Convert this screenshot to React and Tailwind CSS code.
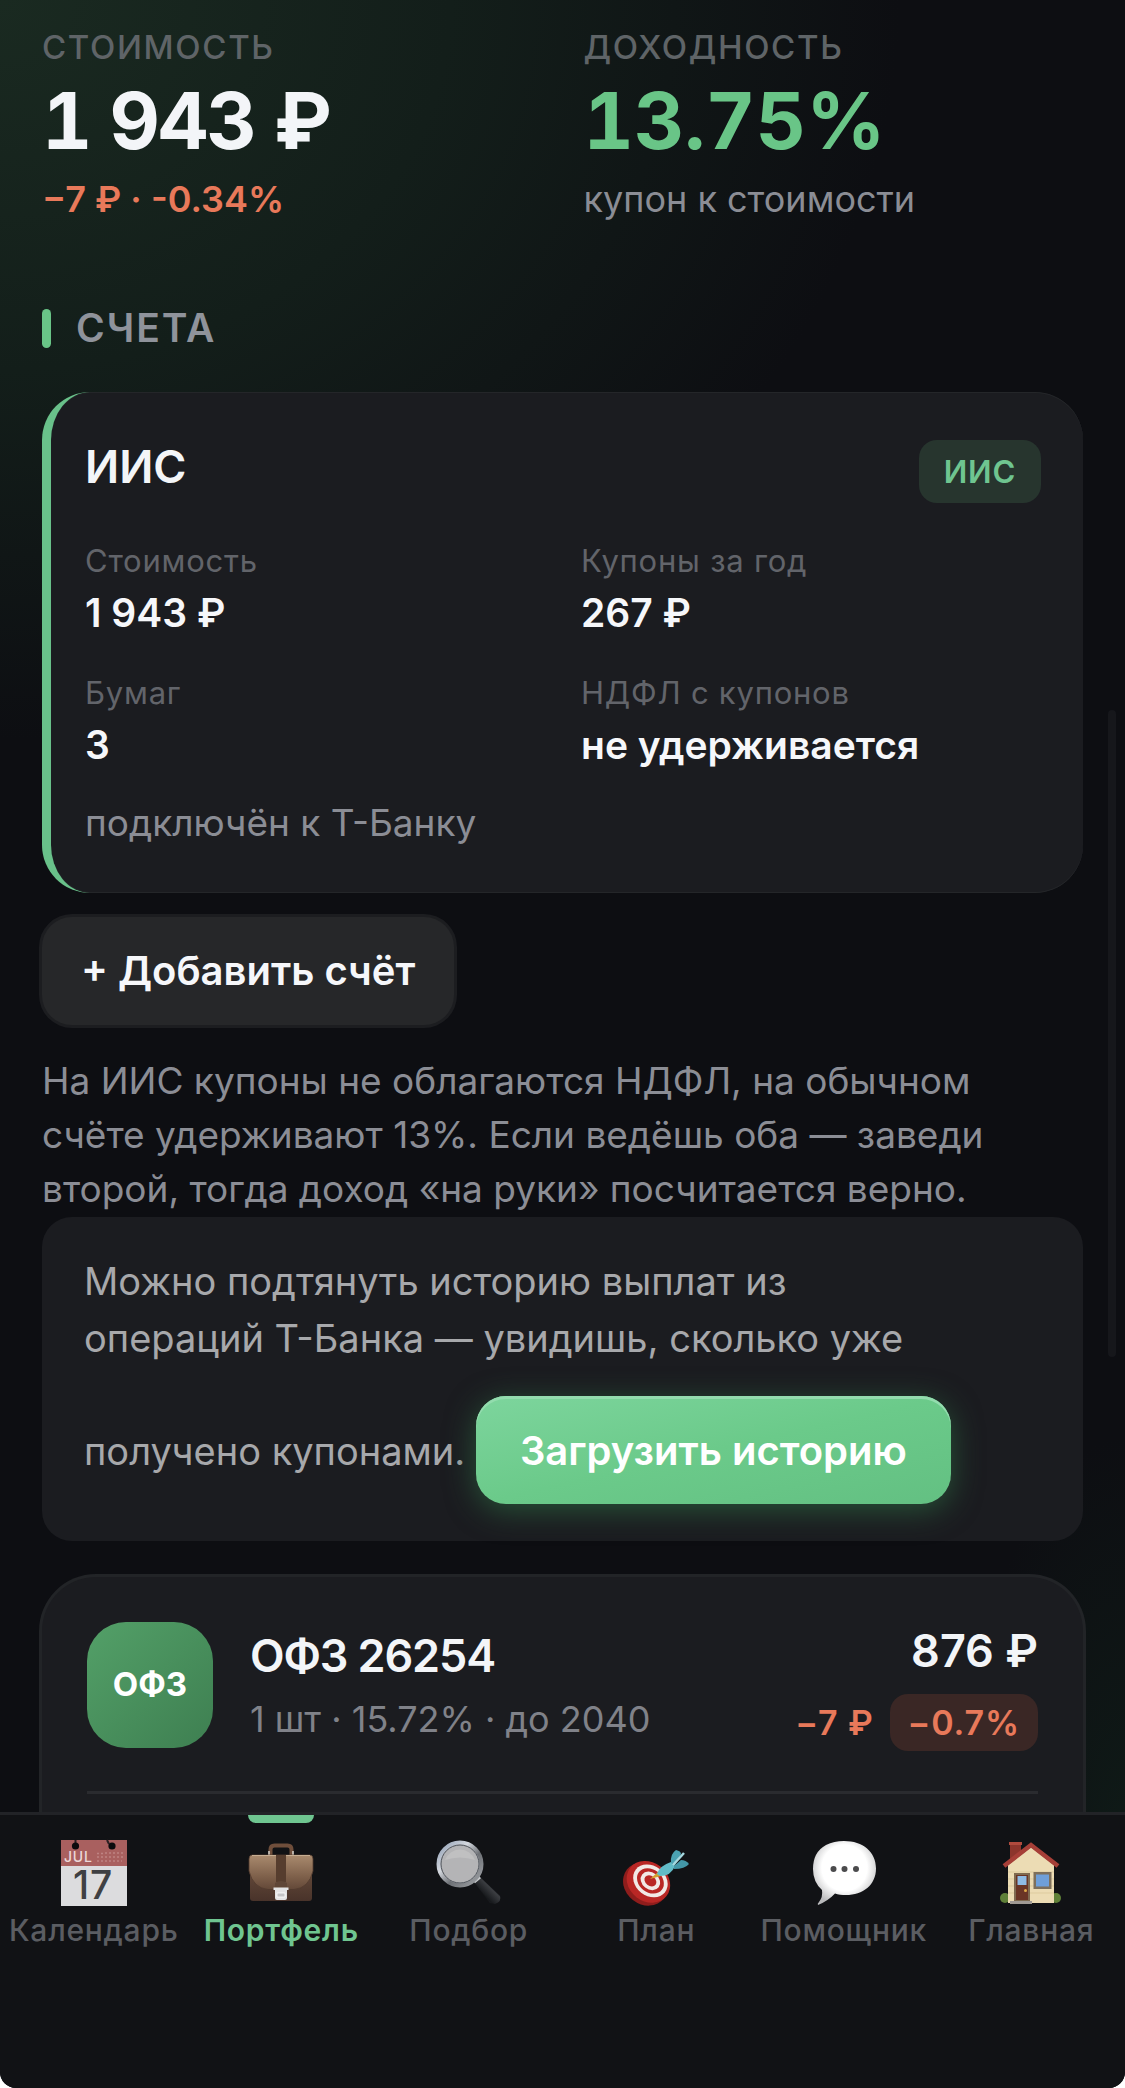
import React from "react";

const totals = [
  {
    label: "Стоимость",
    value: "1 943 ₽",
    valueClass: "text-[#f3f5f8] tracking-tight",
    note: "−7 ₽ · -0.34%",
    noteClass: "font-semibold text-[#e8795a]",
  },
  {
    label: "Доходность",
    value: "13.75%",
    valueClass: "text-[#69c587]",
    note: "купон к стоимости",
    noteClass: "text-[#8b8d95]",
  },
];

const accountStats = [
  { label: "Стоимость", value: "1 943 ₽" },
  { label: "Купоны за год", value: "267 ₽" },
  { label: "Бумаг", value: "3" },
  { label: "НДФЛ с купонов", value: "не удерживается" },
];

function CalendarIcon() {
  return (
    <svg viewBox="0 0 66 66" className="size-[66px] overflow-visible" aria-hidden="true">
      <rect width="66" height="66" fill="#dcdcde" />
      <rect width="66" height="26" fill="#a9605f" />
      <path d="M14.5 0v4M46 0l2 4" stroke="#2a2023" strokeWidth="2" />
      <circle cx="14.500" cy="6" r="3.600" fill="#0b0b0d" />
      <circle cx="51" cy="6" r="3.600" fill="#0b0b0d" />
      <text x="3" y="22" fontSize="14" fill="#ecd9da" fontFamily="Inter, sans-serif">
        JUL
      </text>
      <path
        d="M36 21h3M36 17h3M40 21h21M40 17h23M44 13h19M36 13.500h6"
        stroke="#bf8383"
        strokeWidth="1.500"
        strokeDasharray="2 2"
      />
      <text
        x="32"
        y="59"
        fontSize="39"
        textAnchor="middle"
        fill="#3f4043"
        fontFamily="Inter, sans-serif"
      >
        17
      </text>
    </svg>
  );
}

function BriefcaseIcon() {
  return (
    <svg viewBox="0 0 66 66" className="size-[66px]" aria-hidden="true">
      <defs>
        <linearGradient id="bagFlap" x1="0" y1="0" x2="0" y2="1">
          <stop offset="0" stopColor="#a98a6e" />
          <stop offset="0.6" stopColor="#80624c" />
          <stop offset="1" stopColor="#634838" />
        </linearGradient>
        <linearGradient id="bagBody" x1="0" y1="0" x2="0" y2="1">
          <stop offset="0" stopColor="#6d5140" />
          <stop offset="1" stopColor="#49332a" />
        </linearGradient>
      </defs>
      <path
        d="M22.500 15V9.500Q22.500 5.500 26.500 5.500h13Q43.500 5.500 43.500 9.500V15"
        fill="none"
        stroke="#6f4e3b"
        strokeWidth="4"
      />
      <path d="M21 11v4M45 11v4" stroke="#d9d3cd" strokeWidth="1.500" />
      <path d="M2 20h62v38q0 3-3 3H5q-3 0-3-3z" fill="url(#bagBody)" />
      <path
        d="M4 15h58q3 0 3 4v12Q61 48 46 49.500H20Q5 48 1 31V19q0-4 3-4z"
        fill="url(#bagFlap)"
        stroke="#513a2d"
        strokeWidth="0.800"
      />
      <path d="M4 15.500h58" stroke="#c6ad92" strokeWidth="1" />
      <path d="M28 15h10v27H28z" fill="#563d2e" />
      <path d="M27 43q6-4 12 0v4H27z" fill="#5f4637" />
      <path d="M25.500 47.500h15v2.500h-1.500v8q0 2-2 2h-8q-2 0-2-2v-8h-1.500z" fill="#e3e3e4" />
      <path d="M29 53h8v4h-8z" fill="#c4c4c6" stroke="#fff" strokeWidth="0.800" />
    </svg>
  );
}

function MagnifierIcon() {
  return (
    <svg viewBox="0 0 66 66" className="size-[66px]" aria-hidden="true">
      <defs>
        <linearGradient id="lensRim" x1="0" y1="0" x2="1" y2="1">
          <stop offset="0" stopColor="#8e9db4" />
          <stop offset="0.35" stopColor="#d4d8de" />
          <stop offset="0.6" stopColor="#6d7075" />
          <stop offset="1" stopColor="#a4a7ab" />
        </linearGradient>
        <linearGradient id="lensHandle" x1="0" y1="1" x2="1" y2="0">
          <stop offset="0" stopColor="#5a5c60" />
          <stop offset="0.35" stopColor="#16181b" />
          <stop offset="0.6" stopColor="#3a3c40" />
          <stop offset="1" stopColor="#08090a" />
        </linearGradient>
      </defs>
      <path d="M38 42l6-5 20 19q2 5-5 8l-5-1z" fill="url(#lensHandle)" />
      <path d="M38 42l6-5" stroke="#c9cbce" strokeWidth="3" />
      <circle cx="24" cy="24" r="21.500" fill="#b4b4b6" stroke="url(#lensRim)" strokeWidth="4" />
      <circle cx="24" cy="24" r="19" fill="none" stroke="#50555d" strokeWidth="1" />
      <path d="M9 20a16 16 0 0 1 30 0q-15-5-30 0z" fill="#c0c0c1" />
    </svg>
  );
}

function TargetIcon() {
  return (
    <svg viewBox="0 0 66 66" className="size-[66px]" aria-hidden="true">
      <g transform="rotate(38 24 42)">
        <ellipse cx="24" cy="44.500" rx="23.500" ry="20.500" fill="#8f1d1c" />
        <ellipse cx="25" cy="41" rx="23" ry="19.500" fill="#b92725" />
        <ellipse cx="26" cy="39" rx="18.500" ry="15" fill="#f2e9e6" />
        <ellipse cx="26" cy="39" rx="14.500" ry="11.500" fill="#b92725" />
        <ellipse cx="26" cy="39" rx="10.500" ry="8.500" fill="#f2e9e6" />
        <ellipse cx="26" cy="39" rx="6.500" ry="5" fill="#b92725" />
      </g>
      <path d="M27 39l8-7 3 4z" fill="#d3a02c" />
      <path d="M34 34q2-8 14-12l4 4q-4 10-15 10z" fill="#62bcc8" />
      <path d="M48 23q-1-9 5-13 5 1 5 4l-6 11z" fill="#4ba3b3" />
      <path d="M51 26l7-6q5 0 8 4-4 5-15 5z" fill="#4397a8" />
      <path d="M50 25L61 13" stroke="#a5d8df" strokeWidth="2.500" />
    </svg>
  );
}

function ChatIcon() {
  return (
    <svg viewBox="0 0 66 66" className="size-[66px]" aria-hidden="true">
      <defs>
        <radialGradient id="bubble" cx="0.5" cy="0.42" r="0.6">
          <stop offset="0.6" stopColor="#ffffff" />
          <stop offset="1" stopColor="#b9b9bb" />
        </radialGradient>
      </defs>
      <path
        d="M33 1C52 1 65 12 65 28.500S52 55 35 55c-4 0-8-.5-11-1.500Q17 61 7 65q-1-1 1-3 4-5 3-12Q2 42 2 29 2 12 15 5q8-4 18-4z"
        fill="url(#bubble)"
      />
      <circle cx="22.500" cy="29" r="3" fill="#4b4b4d" />
      <circle cx="33.500" cy="29" r="3" fill="#4b4b4d" />
      <circle cx="45" cy="29" r="3" fill="#4b4b4d" />
    </svg>
  );
}

function HomeIcon() {
  return (
    <svg viewBox="0 0 66 66" className="size-[66px]" aria-hidden="true">
      <circle cx="7" cy="58" r="5" fill="#5f8038" />
      <circle cx="58" cy="58" r="5" fill="#5f8038" />
      <path d="M12 2h11v20H12z" fill="#8c352c" />
      <path d="M11 2h13v3H11z" fill="#b04a3d" />
      <path d="M10 25L33 7l23 18v38H10z" fill="#ecdcb4" />
      <path d="M10 32h46M10 39h46M10 46h46M10 53h46" stroke="#d8c496" strokeWidth="0.700" />
      <path d="M6 26L33 5 60 26" fill="none" stroke="#a63f37" strokeWidth="4.500" />
      <path d="M16 33h16v28H16z" fill="#7f6a50" />
      <path d="M18 35h12v25H18z" fill="#6a3525" />
      <path d="M19.500 36h9v9h-9z" fill="#8fbbe4" />
      <circle cx="27.500" cy="50.500" r="1.500" fill="#e0ac4a" />
      <path d="M35.500 32h18v17h-18z" fill="#7d6f5b" />
      <path d="M38 34.500h13v12H38z" fill="#6f9fd8" />
      <path d="M12 61h22v3H12z" fill="#a09a94" />
    </svg>
  );
}

const tabs = [
  { label: "Календарь", icon: CalendarIcon },
  { label: "Портфель", icon: BriefcaseIcon, active: true },
  { label: "Подбор", icon: MagnifierIcon },
  { label: "План", icon: TargetIcon },
  { label: "Помощник", icon: ChatIcon },
  { label: "Главная", icon: HomeIcon },
];

function AccountCard() {
  return (
    <article className="mt-10 rounded-[48px] border-l-[9px] border-[#69c18a] bg-[#1b1c20] pt-12 pr-[42px] pb-12 pl-[34px] shadow-[inset_0_1px_0_#242629,inset_0_-1px_0_#242629]">
      <div className="flex items-start justify-between">
        <h3 className="text-[45px] leading-[54px] font-semibold text-[#f3f5f8]">ИИС</h3>
        <span className="rounded-[18px] bg-[#27352e] px-[25px] text-[31px] leading-[63px] font-semibold tracking-wide text-[#6fc590]">
          ИИС
        </span>
      </div>
      <dl className="mt-[38px] grid grid-cols-2 gap-x-9 gap-y-9">
        {accountStats.map((stat) => (
          <div key={stat.label}>
            <dt className="text-[31px] leading-10 tracking-wide text-[#62646a]">{stat.label}</dt>
            <dd className="mt-2 text-[39px] leading-12 font-semibold text-[#f6f7fa]">{stat.value}</dd>
          </div>
        ))}
      </dl>
      <p className="mt-8 text-[37px] leading-11 text-[#8b8d95]">подключён к Т-Банку</p>
    </article>
  );
}

function BondCard() {
  return (
    <article className="mt-9 rounded-[54px] bg-[#1b1c20] px-[45px] pt-[41px] pb-24 ring-3 ring-[#222427]">
      <div className="flex items-center border-b-3 border-[#2a2b2f] pb-10">
        <div className="flex size-[126px] shrink-0 items-center justify-center rounded-[39px] bg-linear-to-br from-[#53a068] to-[#3e7f51] text-[33px] font-bold text-white">
          ОФЗ
        </div>
        <div className="ml-[37px] flex-1">
          <h3 className="text-[45px] leading-[54px] font-semibold tracking-tight text-[#f3f5f8]">
            ОФЗ 26254
          </h3>
          <p className="mt-[14px] text-[36px] leading-11 text-[#808289]">1 шт · 15.72% · до 2040</p>
        </div>
        <div className="flex flex-col items-end pt-1.5">
          <p className="text-[45px] leading-[54px] font-semibold text-[#f3f5f8]">876 ₽</p>
          <p className="mt-4 flex items-center gap-4 text-[34px] leading-[57px] font-semibold tracking-wide text-[#e8795a]">
            −7 ₽
            <span className="rounded-[18px] bg-[#3a2725] px-[18px]">−0.7%</span>
          </p>
        </div>
      </div>
    </article>
  );
}

export default function App() {
  return (
    <div className="h-screen bg-white font-[Inter,sans-serif]">
      <div className="relative flex h-full flex-col overflow-hidden rounded-b-[16px] bg-[#0d0e12] bg-[radial-gradient(ellipse_900px_740px_at_0_0,#1a2a21,#131e1a_50%,transparent),radial-gradient(ellipse_160px_400px_at_100%_88%,#0f1a17,transparent)]">
        <main className="min-h-0 flex-1 overflow-hidden px-[42px] pt-[27px]">
          <section className="grid grid-cols-2 gap-x-[42px]">
            {totals.map((item) => (
              <div key={item.label}>
                <p className="text-[33px] leading-10 font-medium tracking-wider text-[#5f6467] uppercase">
                  {item.label}
                </p>
                <p className={`mt-3 text-[78px] leading-21 font-bold tabular-nums ${item.valueClass}`}>
                  {item.value}
                </p>
                <p className={`mt-[14px] text-[36px] leading-11 ${item.noteClass}`}>{item.note}</p>
              </div>
            ))}
          </section>

          <section className="mt-[83px]">
            <h2 className="flex items-center gap-[25px] text-[39px] leading-12 font-semibold tracking-wider text-[#8f939b] uppercase">
              <span className="h-[39px] w-[9px] rounded-full bg-[#69c587]" />
              Счета
            </h2>
            <AccountCard />
            <button
              type="button"
              className="mt-6 h-27 rounded-[30px] bg-[#262729] px-[39px] text-[40px] font-semibold text-[#f6f7fa] ring-3 ring-[#1c1d20]"
            >
              + Добавить счёт
            </button>
            <p className="mt-[29px] max-w-[1000px] text-[37px] leading-[54px] text-[#8b8d95]">
              На ИИС купоны не облагаются НДФЛ, на обычном счёте удерживают 13%. Если ведёшь оба —
              заведи второй, тогда доход «на руки» посчитается верно.
            </p>
          </section>

          <section className="mt-px rounded-[30px] bg-[#1b1c20] px-[42px] pt-9 pb-[37px]">
            <p className="max-w-[884px] text-[38px] leading-[57px] text-[#a7a8ab]">
              Можно подтянуть историю выплат из операций Т-Банка — увидишь, сколько уже получено
              купонами.{" "}
              <button
                type="button"
                className="mt-[29px] h-27 rounded-[30px] bg-linear-to-br from-[#7dd59d] via-[#6bca8a] to-[#63c082] px-11 text-[40px] font-semibold text-white shadow-[inset_0_3px_0_#93dcae,0_6px_30px_#285338]"
              >
                Загрузить историю
              </button>
            </p>
          </section>

          <BondCard />
        </main>

        <div className="absolute top-[34%] right-[9px] h-[31%] w-2 rounded-full bg-[#16171b]" />

        <nav className="grid grid-cols-6 border-t-3 border-[#222327] bg-[#111215] pb-[138px]">
          {tabs.map(({ label, icon: Icon, active }) => (
            <a
              key={label}
              href="#"
              aria-current={active ? "page" : undefined}
              className={`relative flex flex-col items-center pt-[25px] text-[30px] leading-10 tracking-wide ${
                active ? "font-semibold text-[#6fc590]" : "font-medium text-[#5b5d62]"
              }`}
            >
              {active && (
                <span className="absolute top-0 h-2 w-[66px] rounded-b-lg bg-[#6fc590]" />
              )}
              <Icon />
              <span className="mt-1">{label}</span>
            </a>
          ))}
        </nav>
      </div>
    </div>
  );
}
